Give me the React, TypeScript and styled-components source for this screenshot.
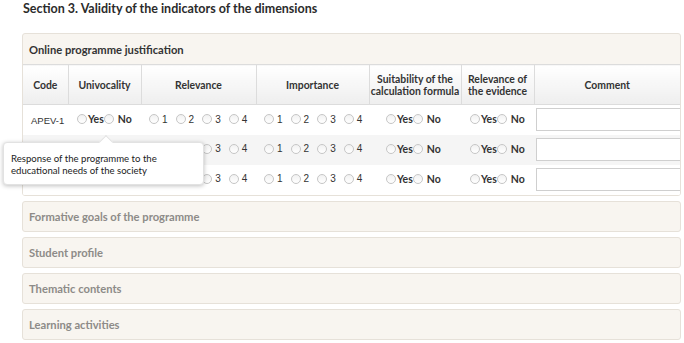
import React from "react";
import styled, { createGlobalStyle } from "styled-components";

const Global = createGlobalStyle`
  html, body { margin: 0; padding: 0; background: #ffffff; }
  body { font-family: "Lato", "Open Sans", sans-serif; color: #333; }
`;

const Page = styled.div`
  position: relative;
  width: 684px;
  height: 343px;
  overflow: hidden;
  padding: 0 3px 0 22px;
  box-sizing: border-box;
`;

const Title = styled.h2`
  margin: 0;
  padding: 1px 0 0 1px;
  height: 33px;
  box-sizing: border-box;
  font-size: 12.5px;
  font-weight: 700;
  color: #2b2b2b;
`;

const Stack = styled.div`
  display: flex;
  flex-direction: column;
  gap: 5px;
`;

const Panel = styled.section`
  border: 1px solid #e6e1d9;
  border-radius: 3px;
  background: #f8f5f0;
  overflow: hidden;
`;

const PanelHead = styled.div<{ $muted?: boolean }>`
  height: ${(p) => (p.$muted ? 29 : 30)}px;
  display: flex;
  align-items: center;
  padding-left: 6px;
  font-size: 11.2px;
  font-weight: 700;
  color: ${(p) => (p.$muted ? "#8d8b88" : "#333")};
`;

const Table = styled.table`
  width: 100%;
  border-collapse: collapse;
  table-layout: fixed;
  background: #fff;
`;

const Th = styled.th`
  height: 40px;
  padding: 0 1px;
  box-sizing: border-box;
  font-size: 10.4px;
  font-weight: 700;
  color: #333;
  line-height: 12px;
  background: linear-gradient(#ffffff, #eeeeee);
  border-top: 1px solid #dcdcdc;
  border-bottom: 1px solid #dcdcdc;
  border-left: 1px solid #dcdcdc;
  &:first-child { border-left: none; }
`;

const Tr = styled.tr<{ $alt?: boolean }>`
  height: 30px;
  background: ${(p) => (p.$alt ? "#f5f5f5" : "#ffffff")};
`;

const Td = styled.td<{ $pl?: number }>`
  padding: 0 0 0 ${(p) => p.$pl ?? 0}px;
  font-size: 10px;
  vertical-align: middle;
  white-space: nowrap;
  overflow: hidden;
`;

const Code = styled.span`
  font-family: "Liberation Sans", Arial, sans-serif;
  font-size: 9.5px;
  color: #333;
`;

const Opt = styled.label<{ $gap?: number }>`
  display: inline-flex;
  align-items: center;
  margin-right: ${(p) => p.$gap ?? 0}px;
`;

const Circle = styled.span<{ $mr?: number }>`
  display: inline-block;
  width: 10px;
  height: 10px;
  border-radius: 50%;
  border: 1px solid #c6c6c6;
  background: linear-gradient(#f1f1f1, #ffffff);
  margin-right: ${(p) => p.$mr ?? 2}px;
  box-sizing: border-box;
`;

const YesNo = styled.span`
  font-size: 10.5px;
  font-weight: 700;
  color: #333;
`;

const Num = styled.span`
  font-family: "Liberation Sans", Arial, sans-serif;
  font-size: 10px;
  color: #333;
`;

const Input = styled.div`
  height: 21px;
  margin-left: 2px;
  border: 1px solid #cfcfcf;
  border-right: none;
  background: #fff;
`;

const Tip = styled.div`
  position: absolute;
  left: 3px;
  top: 142px;
  width: 201px;
  height: 43px;
  box-sizing: border-box;
  padding: 10px 0 0 7px;
  background: #fff;
  border: 1px solid #e2e2e2;
  border-radius: 4px;
  box-shadow: 0 1px 4px rgba(0, 0, 0, 0.25);
  font-size: 9.6px;
  line-height: 12px;
  color: #222;
  &::before {
    content: "";
    position: absolute;
    left: 97px;
    top: -6px;
    width: 9px;
    height: 9px;
    background: #fff;
    border-left: 1px solid #e2e2e2;
    border-top: 1px solid #e2e2e2;
    transform: rotate(45deg);
  }
`;

const YN = () => (
  <>
    <Opt>
      <Circle $mr={1} />
      <YesNo>Yes</YesNo>
    </Opt>
    <Opt>
      <Circle $mr={4} />
      <YesNo>No</YesNo>
    </Opt>
  </>
);

const Scale = () => (
  <>
    {[1, 2, 3, 4].map((n) => (
      <Opt key={n} $gap={n < 4 ? 8 : 0}>
        <Circle $mr={3} />
        <Num>{n}</Num>
      </Opt>
    ))}
  </>
);

const cols = [
  { w: 45, t: "Code" },
  { w: 73, t: "Univocality" },
  { w: 115, t: "Relevance" },
  { w: 113, t: "Importance" },
  { w: 92, t: "Suitability of the calculation formula" },
  { w: 73, t: "Relevance of the evidence" },
  { w: 146, t: "Comment" },
];

const others = [
  "Formative goals of the programme",
  "Student profile",
  "Thematic contents",
  "Learning activities",
];

export default function App() {
  return (
    <Page>
      <Global />
      <Title>Section 3. Validity of the indicators of the dimensions</Title>
      <Stack>
        <Panel>
          <PanelHead>Online programme justification</PanelHead>
          <Table>
            <colgroup>
              {cols.map((c) => (
                <col key={c.t} style={{ width: c.w }} />
              ))}
            </colgroup>
            <thead>
              <tr>
                {cols.map((c) => (
                  <Th key={c.t}>{c.t}</Th>
                ))}
              </tr>
            </thead>
            <tbody>
              {[0, 1, 2].map((i) => (
                <Tr key={i} $alt={i === 1}>
                  <Td $pl={8}>{i === 0 ? <Code>APEV-1</Code> : null}</Td>
                  <Td $pl={9}>
                    <YN />
                  </Td>
                  <Td $pl={8}>
                    <Scale />
                  </Td>
                  <Td $pl={8}>
                    <Scale />
                  </Td>
                  <Td $pl={17}>
                    <YN />
                  </Td>
                  <Td $pl={9}>
                    <YN />
                  </Td>
                  <Td>
                    <Input />
                  </Td>
                </Tr>
              ))}
            </tbody>
          </Table>
        </Panel>
        {others.map((o) => (
          <Panel key={o}>
            <PanelHead $muted>{o}</PanelHead>
          </Panel>
        ))}
      </Stack>
      <Tip>
        Response of the programme to the
        <br />
        educational needs of the society
      </Tip>
    </Page>
  );
}
